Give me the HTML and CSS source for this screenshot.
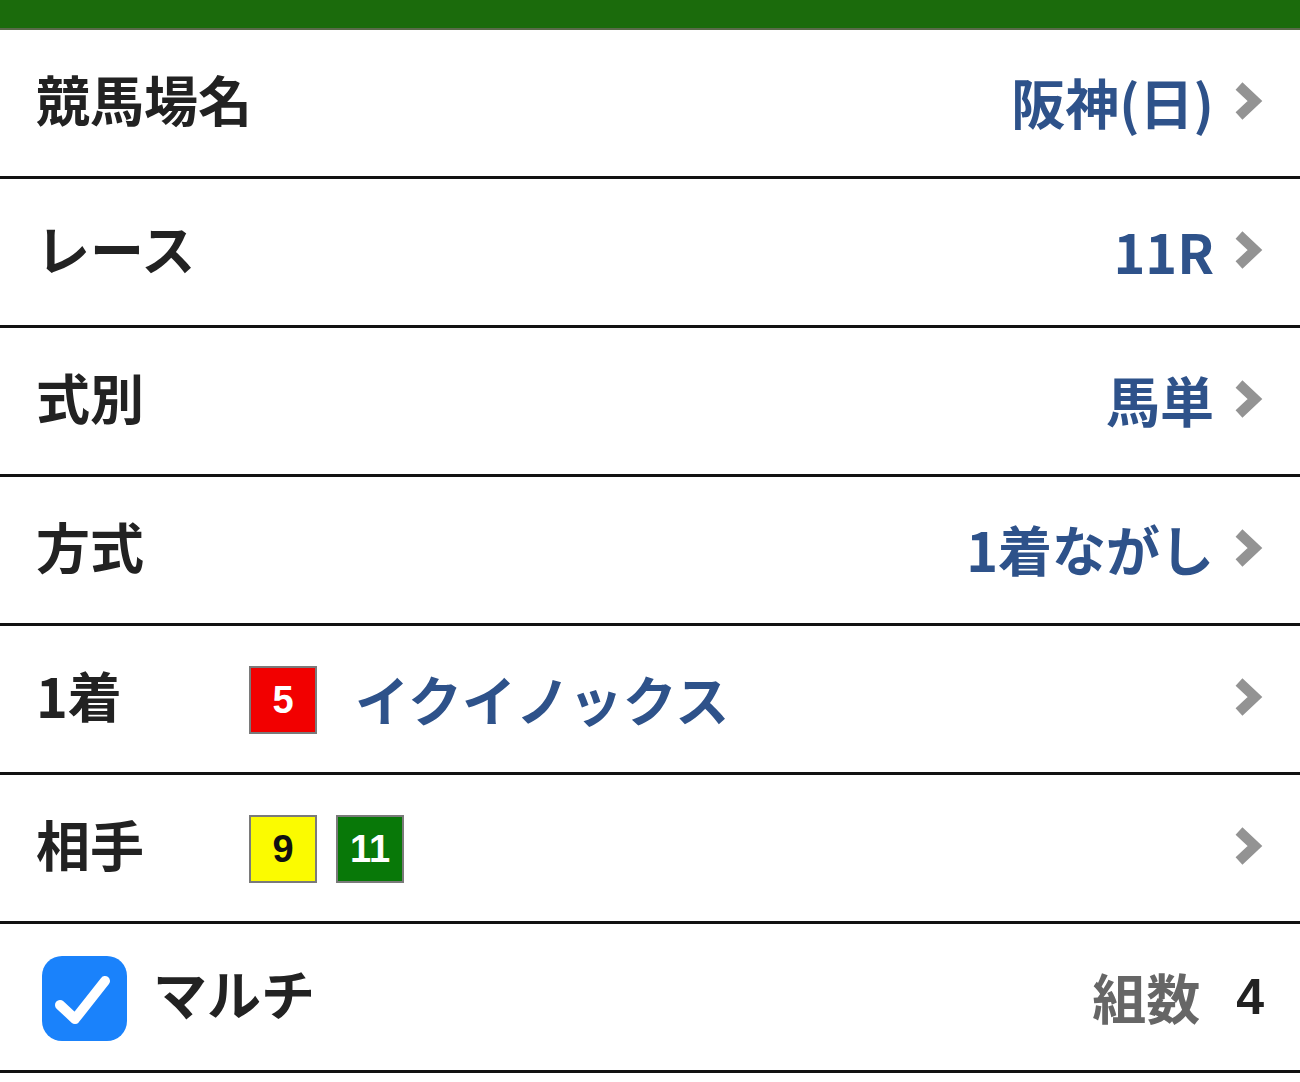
FILE: index.html
```html
<!DOCTYPE html>
<html lang="ja">
<head>
<meta charset="utf-8">
<link rel="stylesheet" href="styles.css">
</head>
<body>
<div class="topbar"></div>
<ul class="list">
  <li class="row">
    <span class="label">競馬場名</span>
    <span class="value">阪神(日)</span>
    <span class="chev"><svg viewBox="0 0 32 42" width="32" height="42"><path d="M7 6 L23 21 L7 36" fill="none" stroke="#939393" stroke-width="10"/></svg></span>
  </li>
  <li class="row">
    <span class="label">レース</span>
    <span class="value">11R</span>
    <span class="chev"><svg viewBox="0 0 32 42" width="32" height="42"><path d="M7 6 L23 21 L7 36" fill="none" stroke="#939393" stroke-width="10"/></svg></span>
  </li>
  <li class="row">
    <span class="label">式別</span>
    <span class="value">馬単</span>
    <span class="chev"><svg viewBox="0 0 32 42" width="32" height="42"><path d="M7 6 L23 21 L7 36" fill="none" stroke="#939393" stroke-width="10"/></svg></span>
  </li>
  <li class="row">
    <span class="label">方式</span>
    <span class="value">1着ながし</span>
    <span class="chev"><svg viewBox="0 0 32 42" width="32" height="42"><path d="M7 6 L23 21 L7 36" fill="none" stroke="#939393" stroke-width="10"/></svg></span>
  </li>
  <li class="row">
    <span class="label label-fixed">1着</span>
    <span class="horses">
      <span class="badge badge-red">5</span>
      <span class="horse-name">イクイノックス</span>
    </span>
    <span class="chev"><svg viewBox="0 0 32 42" width="32" height="42"><path d="M7 6 L23 21 L7 36" fill="none" stroke="#939393" stroke-width="10"/></svg></span>
  </li>
  <li class="row">
    <span class="label label-fixed">相手</span>
    <span class="horses">
      <span class="badge badge-yellow">9</span>
      <span class="badge badge-green">11</span>
    </span>
    <span class="chev"><svg viewBox="0 0 32 42" width="32" height="42"><path d="M7 6 L23 21 L7 36" fill="none" stroke="#939393" stroke-width="10"/></svg></span>
  </li>
  <li class="row row-multi">
    <span class="check"><svg viewBox="0 0 85 85" width="85" height="85"><rect x="0" y="0" width="85" height="85" rx="20" fill="#1a82fb"/><path d="M18 49 L33 63 L63 25" fill="none" stroke="#fff" stroke-width="10" stroke-linecap="round" stroke-linejoin="round"/></svg></span>
    <span class="label multi-label">マルチ</span>
    <span class="count-label">組数</span>
    <span class="count">4</span>
  </li>
</ul>
</body>
</html>
```
FILE: styles.css
```css
* { box-sizing: border-box; }
html, body {
  margin: 0;
  padding: 0;
  background: #fff;
  font-family: "Noto Sans CJK JP", "Noto Sans", "Liberation Sans", sans-serif;
}
.topbar {
  height: 30px;
  background: #1b6b0c;
  border-bottom: 2px solid #5a6a4a;
}
.list {
  list-style: none;
  margin: 0;
  padding: 0;
}
.row {
  height: 149px;
  border-bottom: 3px solid #111;
  display: flex;
  align-items: center;
  padding: 0 36px 0 36px;
  font-weight: 700;
}
.label {
  font-size: 54px;
  color: #222;
  line-height: 1;
  margin-top: -8px;
}
.label-fixed { width: 213px; flex: none; }
.value {
  margin-left: auto;
  font-size: 54px;
  color: #2e528a;
  line-height: 1;
  margin-top: -2px;
}
.chev {
  margin-left: 18px;
  display: flex;
  align-items: center;
  margin-top: -4px;
}
.horses {
  display: flex;
  align-items: center;
  gap: 19px;
  flex: 1;
}
.badge {
  width: 68px;
  height: 68px;
  border: 2px solid #7a7a7a;
  display: flex;
  align-items: center;
  justify-content: center;
  font-family: "Liberation Sans", Arial, sans-serif;
  font-weight: 700;
  font-size: 38px;
  margin-top: 2px;
}
.badge-red { background: #f20000; color: #fff; }
.badge-yellow { background: #fbfb00; color: #111; }
.badge-green { background: #087808; color: #fff; }
.horse-name {
  font-size: 54px;
  color: #2e528a;
  line-height: 1;
  margin-left: 19px;
}
.row-multi { padding-left: 42px; }
.check { display: flex; margin-top: 2px; }
.multi-label { margin-left: 26px; }
.count-label {
  margin-left: auto;
  font-size: 54px;
  color: #666;
  line-height: 1;
}
.count {
  margin-left: 36px;
  font-family: "Liberation Sans", Arial, sans-serif;
  font-size: 50px;
  color: #222;
  line-height: 1;
}
```
